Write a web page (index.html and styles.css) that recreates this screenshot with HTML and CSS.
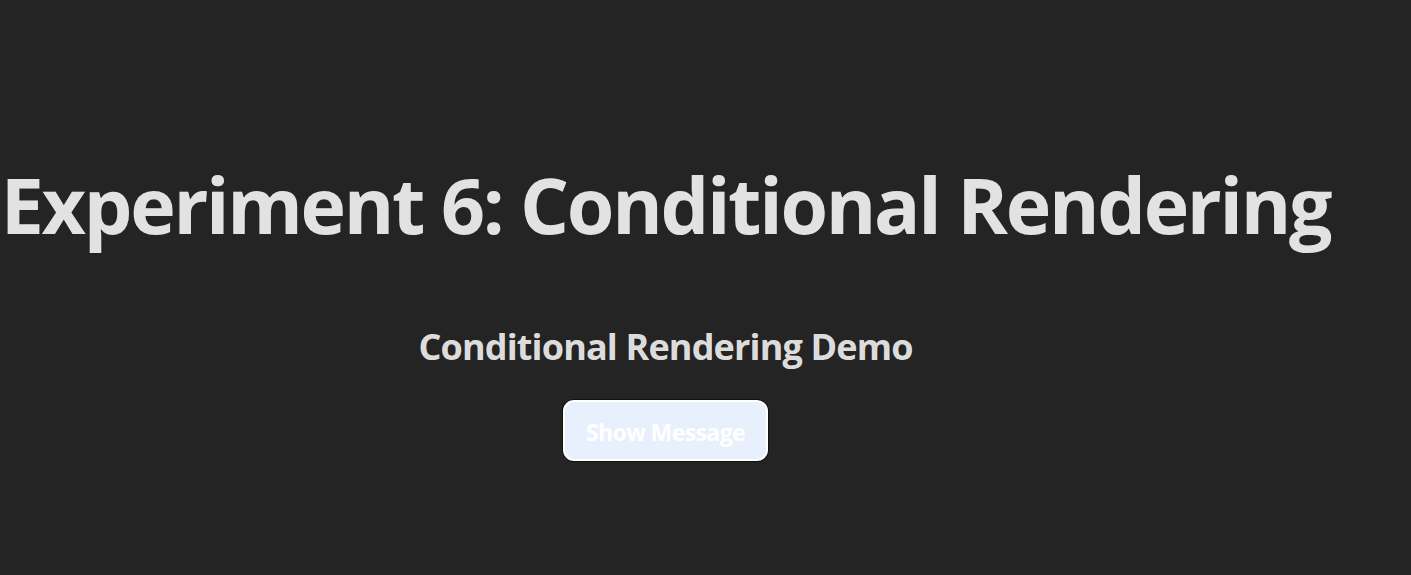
FILE: index.html
```html
<!DOCTYPE html>
<html lang="en">
<head>
<meta charset="utf-8">
<title>Experiment 6</title>
<link rel="stylesheet" href="styles.css">
</head>
<body>
<div class="root">
  <h1 class="title">Experiment 6: Conditional Rendering</h1>
  <div class="demo">
    <h2 class="subtitle">Conditional Rendering Demo</h2>
    <button class="btn" type="button">Show Message</button>
  </div>
</div>
</body>
</html>
```
FILE: styles.css
```css
html, body {
  margin: 0;
  padding: 0;
}
body {
  background: #242424;
  color: rgba(255, 255, 255, 0.87);
  font-family: "Open Sans", "Noto Sans", sans-serif;
  height: 575px;
  overflow: hidden;
}
.root {
  width: 1331px;
  text-align: center;
  padding-top: 163px;
}
.title {
  margin: 0;
  font-size: 77px;
  line-height: 1.1;
  font-weight: 700;
  letter-spacing: -2.3px;
  white-space: nowrap;
}
.demo {
  display: flex;
  flex-direction: column;
  align-items: center;
}
.subtitle {
  margin: 77px 0 0;
  font-size: 36px;
  line-height: 1.2;
  font-weight: 700;
  letter-spacing: -0.85px;
}
.btn {
  margin-top: 32px;
  width: 205px;
  height: 61px;
  box-sizing: border-box;
  border: 2px solid #ffffff;
  border-radius: 11px;
  box-shadow: 0 0 0 1px #111;
  background: #e8f0fe;
  color: #ffffff;
  font-family: inherit;
  font-size: 23px;
  font-weight: 700;
  letter-spacing: -0.6px;
  padding: 4px 0 0;
  cursor: pointer;
}
```
